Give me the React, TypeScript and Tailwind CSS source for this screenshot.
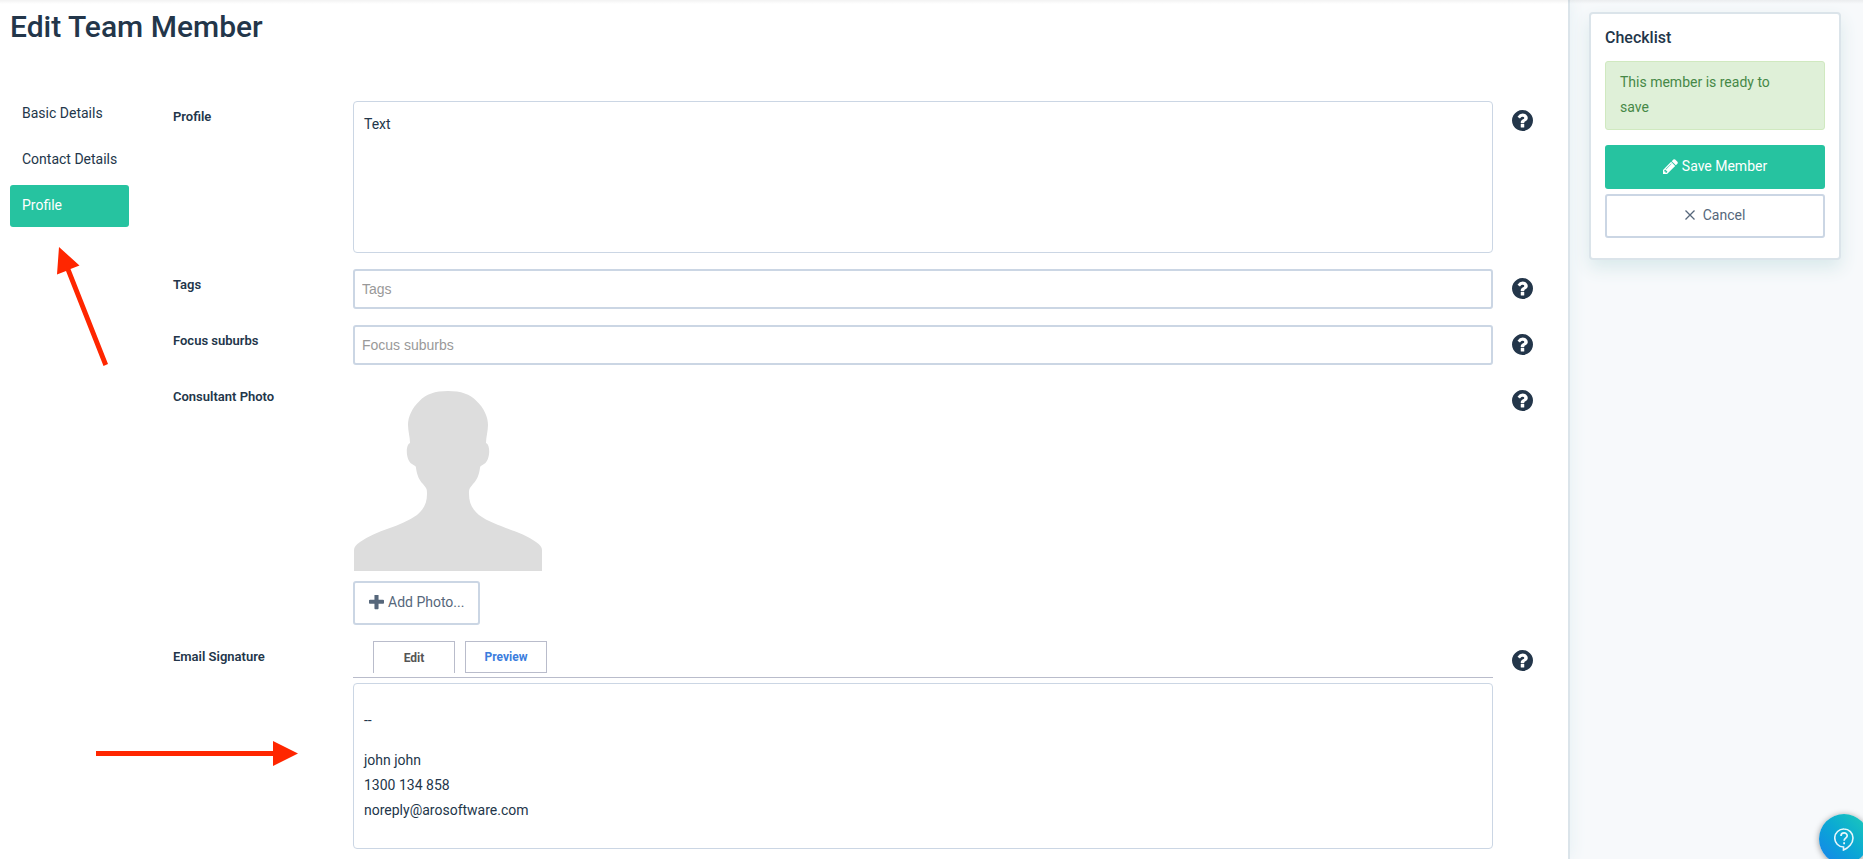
import type { ReactNode } from 'react';

const navItems = ['Basic Details', 'Contact Details', 'Profile'];

function HelpIcon() {
  return (
    <svg viewBox="128 128 1536 1536" className="w-[21px] h-[21px] fill-[#23364a]" aria-hidden="true">
      <path d="M1024 1376v-192q0-14-9-23t-23-9h-192q-14 0-23 9t-9 23v192q0 14 9 23t23 9h192q14 0 23-9t9-23zm256-672q0-88-55.500-163t-138.500-116-170-41q-243 0-371 213-15 24 8 42l132 100q7 6 19 6 16 0 25-12 53-68 86-92 34-24 86-24 48 0 85.500 26t37.500 59q0 38-20 61t-68 45q-63 28-115.500 86.500t-52.500 125.500v36q0 14 9 23t23 9h192q14 0 23-9t9-23q0-19 21.500-49.500t54.500-49.500q32-18 49-28.500t46-35 44.500-48 28-60.500 12.500-81zm384 192q0 209-103 385.500t-279.500 279.500-385.500 103-385.500-103-279.500-279.500-103-385.500 103-385.500 279.500-279.500 385.500-103 385.500 103 279.500 279.500 103 385.500z" />
    </svg>
  );
}

function PencilIcon() {
  return (
    <svg viewBox="128 128 1536 1536" className="w-[15px] h-[15px] fill-white" aria-hidden="true">
      <path d="M491 1536l91-91-235-235-91 91v107h128v128h107zm523-928q0-22-22-22-10 0-17 7l-542 542q-7 7-7 17 0 22 22 22 10 0 17-7l542-542q7-7 7-17zm-54-192l416 416-832 832h-416v-416zm683 96q0 53-37 90l-166 166-416-416 166-165q36-38 90-38 53 0 91 38l235 234q37 39 37 91z" />
    </svg>
  );
}

function PlusIcon() {
  return (
    <svg viewBox="192 192 1408 1408" className="w-[15px] h-[15px] fill-[#56677b]" aria-hidden="true">
      <path d="M1600 736v192q0 40-28 68t-68 28h-416v416q0 40-28 68t-68 28h-192q-40 0-68-28t-28-68v-416h-416q-40 0-68-28t-28-68v-192q0-40 28-68t68-28h416v-416q0-40 28-68t68-28h192q40 0 68 28t28 68v416h416q40 0 68 28t28 68z" />
    </svg>
  );
}

function Silhouette() {
  return (
    <svg viewBox="0 0 188 180" className="w-[188px] h-[180px] fill-[#ddd]" role="img" aria-label="Consultant">
      <path d="M94 0C107 0 116 3 122.500 10C130 17 134 26 134 34C134 40 132 46 132 52C137 54 136 70 130 73C127 75 126 75 126 77C125 84 123 89 119 93C115 98 115 98 115 103C115 112 118 118 125 124C141 136 166 139 182 151C186 154 188 156 188 159V180H0V159C0 156 2 154 6 151C22 139 47 136 63 124C70 118 73 112 73 103C73 98 73 98 69 93C65 89 63 84 62 77C62 75 61 75 58 73C52 70 51 54 56 52C56 46 54 40 54 34C54 26 58 17 65.500 10C72 3 81 0 94 0Z" />
    </svg>
  );
}

type RowProps = {
  label: string;
  htmlFor?: string;
  labelId?: string;
  children: ReactNode;
};

function FormRow({ label, htmlFor, labelId, children }: RowProps) {
  return (
    <div className="flex items-start">
      <label id={labelId} htmlFor={htmlFor} className="w-[180px] shrink-0 text-[13px] leading-8 font-semibold">
        {label}
      </label>
      <div className="flex-1 min-w-0">{children}</div>
      <button type="button" aria-label={`Help: ${label}`} className="w-[75px] shrink-0 pl-[19px] pt-[9px]">
        <HelpIcon />
      </button>
    </div>
  );
}

export default function App() {
  return (
    <div className="relative flex min-h-screen overflow-hidden bg-[#f7f9fb] text-sm text-[#23364a] font-[Roboto,sans-serif]">
      <main className="relative flex-1 min-w-0 bg-white border-r-2 border-[#dbe4ea] shadow-[0_0_16px_#e4eff3] pl-2.5 pb-2.5">
        <h1 className="pt-[7px] text-[30px] leading-10 font-medium">Edit Team Member</h1>

        <div className="flex items-start pt-[46px]">
          <nav className="w-[119px] shrink-0 flex flex-col gap-1 mr-11 whitespace-nowrap">
            {navItems.map((item) => (
              <a
                key={item}
                href="#"
                className={
                  item === 'Profile'
                    ? 'block px-3 pt-2.5 pb-3 leading-5 rounded-[3px] bg-[#26c3a0] text-white'
                    : 'block px-3 pt-2.5 pb-3 leading-5 rounded-[3px]'
                }
              >
                {item}
              </a>
            ))}
          </nav>

          <form className="flex-1 min-w-0 flex flex-col gap-4 pt-2">
            <FormRow label="Profile" htmlFor="profile">
              <textarea
                id="profile"
                defaultValue="Text"
                className="block w-full h-[152px] px-2.5 py-[11px] leading-[22px] resize-none rounded border border-[#cbd6e4]"
              />
            </FormRow>

            <FormRow label="Tags" htmlFor="tags">
              <input
                id="tags"
                type="text"
                placeholder="Tags"
                className="block w-full h-10 px-[7px] rounded-[3px] border-2 border-[#cbd6e4] font-['Liberation_Sans',sans-serif] placeholder:text-[#999]"
              />
            </FormRow>

            <FormRow label="Focus suburbs" htmlFor="suburbs">
              <input
                id="suburbs"
                type="text"
                placeholder="Focus suburbs"
                className="block w-full h-10 px-[7px] rounded-[3px] border-2 border-[#cbd6e4] font-['Liberation_Sans',sans-serif] placeholder:text-[#999]"
              />
            </FormRow>

            <FormRow label="Consultant Photo" htmlFor="photo">
              <div className="pt-2.5 pl-px">
                <Silhouette />
              </div>
              <button
                id="photo"
                type="button"
                className="mt-2.5 h-11 px-3.5 pb-0.5 flex items-center gap-1 rounded-[3px] border-2 border-[#cbd6e4] text-[#56677b]"
              >
                <PlusIcon />
                Add Photo...
              </button>
            </FormRow>

            <FormRow label="Email Signature" labelId="signature-label">
              <div className="flex gap-2.5 pl-5 pb-1 border-b border-[#b9bccb] text-xs font-bold">
                <button type="button" className="w-[82px] h-8 border border-b-0 border-[#b9bccb] text-[#555]">
                  Edit
                </button>
                <button type="button" className="w-[82px] h-8 border border-[#b9bccb] text-[#3b7ddd]">
                  Preview
                </button>
              </div>
              {/* rich text editor, paragraphs keep their own spacing */}
              <div
                role="textbox"
                aria-multiline="true"
                aria-labelledby="signature-label"
                contentEditable
                suppressContentEditableWarning
                className="min-h-[166px] mt-[5px] px-2.5 pt-6 leading-[25px] rounded border border-[#cbd6e4]"
              >
                <p className="mb-[15px]">--</p>
                <p>
                  john john
                  <br />
                  1300 134 858
                  <br />
                  noreply@arosoftware.com
                </p>
              </div>
            </FormRow>
          </form>
        </div>
      </main>

      <aside className="w-[293px] shrink-0 pt-3 pl-[19px] pr-[22px]">
        <section className="relative rounded border-2 border-[#dbe4ea] bg-white px-3.5 pt-3 pb-5 shadow-[0_8px_18px_#d9e9eb]">
          <h2 className="text-base leading-[23px] font-medium">Checklist</h2>
          <p className="mt-3 pl-3.5 pr-10 py-2 leading-[25px] min-h-[69px] rounded-[3px] border border-[#d0e9c0] bg-[#dff0d8] text-[#468847]">
            This member is ready to save
          </p>
          <button
            type="button"
            className="mt-[15px] w-full h-11 pb-0.5 flex items-center justify-center gap-1 rounded-[3px] bg-[#26c3a0] text-white"
          >
            <PencilIcon />
            Save Member
          </button>
          <button
            type="button"
            className="mt-[5px] w-full h-11 pb-0.5 flex items-center justify-center gap-2 rounded-[3px] border-2 border-[#cbd6e4] text-[#56677b]"
          >
            <svg viewBox="0 0 10 10" className="w-2.5 h-2.5 fill-none stroke-[#56677b]" aria-hidden="true">
              <path d="M.5.5l9 9M9.500.5l-9 9" strokeWidth="1.300" />
            </svg>
            Cancel
          </button>
        </section>
      </aside>

      <div className="absolute inset-x-0 top-0 h-1 bg-linear-to-b from-black/5 to-transparent" />

      {/* annotation arrows */}
      <svg viewBox="0 0 56 120" className="absolute left-[55px] top-[246px] w-14 h-[120px] fill-[#ff2600]" aria-hidden="true">
        <path d="M4 1L24.500 19.500L15.500 23L53 118L48.500 120L11 25L2 28.500Z" />
      </svg>
      <svg viewBox="0 0 202 26" className="absolute left-24 top-[740px] w-[202px] h-[26px] fill-[#ff2600]" aria-hidden="true">
        <path d="M0 11H177V1L202 13.500L177 26V16H0Z" />
      </svg>

      <button
        type="button"
        aria-label="Help"
        className="absolute -right-[6px] top-[814px] w-[50px] h-[50px] flex items-center justify-center rounded-full bg-linear-to-tr from-[#1b80ec] to-[#20cbb6] shadow-[0_1px_6px_rgba(0,0,0,0.4)]"
      >
        <svg viewBox="0 0 20 23" className="w-5 h-[23px] fill-none stroke-white/90" aria-hidden="true">
          <path d="M10 1a9 9 0 0 0-.5 18v3c5-2 9.500-6.500 9.500-12A9 9 0 0 0 10 1Z" strokeWidth="1.600" />
          <path d="M7 8c0-4.200 6.200-4 6.200-.3 0 2.300-3.100 2.500-3.100 5" strokeWidth="1.700" />
          <path d="M10.100 14.300v2" strokeWidth="1.800" />
        </svg>
      </button>
    </div>
  );
}
